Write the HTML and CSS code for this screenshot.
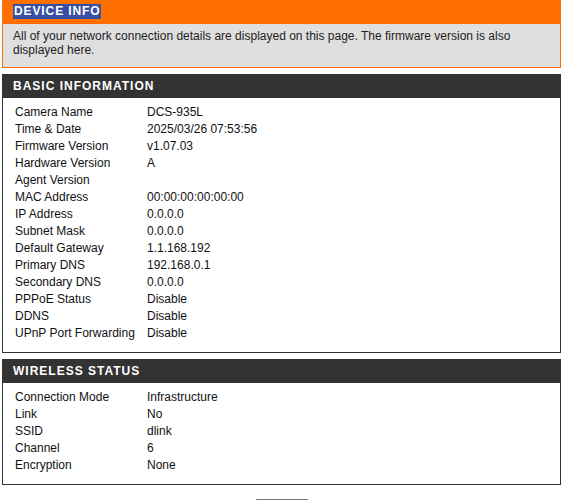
FILE: index.html
```html
<!DOCTYPE html>
<html>
<head>
<meta charset="utf-8">
<link rel="stylesheet" href="styles.css">
</head>
<body>
<div class="intro">
  <div class="intro-head"><span class="intro-title">DEVICE INFO</span></div>
  <div class="intro-body">All of your network connection details are displayed on this page. The firmware version is also displayed here.</div>
</div>

<div class="section">
  <div class="section-head">BASIC INFORMATION</div>
  <div class="section-body">
    <div class="row"><span class="label">Camera Name</span><span class="value">DCS-935L</span></div>
    <div class="row"><span class="label">Time &amp; Date</span><span class="value">2025/03/26 07:53:56</span></div>
    <div class="row"><span class="label">Firmware Version</span><span class="value">v1.07.03</span></div>
    <div class="row"><span class="label">Hardware Version</span><span class="value">A</span></div>
    <div class="row"><span class="label">Agent Version</span><span class="value"></span></div>
    <div class="row"><span class="label">MAC Address</span><span class="value">00:00:00:00:00:00</span></div>
    <div class="row"><span class="label">IP Address</span><span class="value">0.0.0.0</span></div>
    <div class="row"><span class="label">Subnet Mask</span><span class="value">0.0.0.0</span></div>
    <div class="row"><span class="label">Default Gateway</span><span class="value">1.1.168.192</span></div>
    <div class="row"><span class="label">Primary DNS</span><span class="value">192.168.0.1</span></div>
    <div class="row"><span class="label">Secondary DNS</span><span class="value">0.0.0.0</span></div>
    <div class="row"><span class="label">PPPoE Status</span><span class="value">Disable</span></div>
    <div class="row"><span class="label">DDNS</span><span class="value">Disable</span></div>
    <div class="row"><span class="label">UPnP Port Forwarding</span><span class="value">Disable</span></div>
  </div>
</div>

<div class="section">
  <div class="section-head">WIRELESS STATUS</div>
  <div class="section-body">
    <div class="row"><span class="label">Connection Mode</span><span class="value">Infrastructure</span></div>
    <div class="row"><span class="label">Link</span><span class="value">No</span></div>
    <div class="row"><span class="label">SSID</span><span class="value">dlink</span></div>
    <div class="row"><span class="label">Channel</span><span class="value">6</span></div>
    <div class="row"><span class="label">Encryption</span><span class="value">None</span></div>
  </div>
</div>

<div class="actions"><button class="btn" type="button">Refresh</button></div>
</body>
</html>
```
FILE: styles.css
```css
html, body {
  margin: 0;
  padding: 0;
  background: #fff;
}
body {
  padding: 0 5px 0 2px;
  font-family: "Liberation Sans", Arial, sans-serif;
  font-size: 12px;
  color: #000;
}
.intro {
  border: 1px solid #ff6f00;
  border-top: 0;
  background: #dfdfdf;
}
.intro-head {
  background: #ff6f00;
  height: 24px;
  padding: 4px 0 0 10px;
  box-sizing: border-box;
}
.intro-title {
  display: inline-block;
  background: #3850a3;
  color: #fff;
  font-weight: bold;
  font-size: 12px;
  letter-spacing: 0.9px;
  line-height: 15px;
  padding: 0 0 0 1px;
}
.intro-body {
  padding: 5px 10px 3px 10px;
  line-height: 14px;
  color: #222;
  height: 43px;
  box-sizing: border-box;
}
.section {
  margin-top: 6px;
}
.section-head {
  background: #333;
  color: #fff;
  font-weight: bold;
  font-size: 12px;
  letter-spacing: 1px;
  height: 24px;
  line-height: 25px;
  padding-left: 11px;
}
.section-body {
  border: 1px solid #333;
  border-top: 0;
  padding: 6px 0 10px 12px;
}
.row {
  display: grid;
  grid-template-columns: 132px 1fr;
  height: 17px;
  line-height: 17px;
  color: #111;
}
.actions {
  display: flex;
  justify-content: center;
  padding-top: 14px;
}
.btn {
  width: 54px;
  height: 24px;
  font-family: "Liberation Sans", Arial, sans-serif;
  font-size: 12px;
  background: #eee;
  border: 1px solid #777;
  border-radius: 2px;
}
```
